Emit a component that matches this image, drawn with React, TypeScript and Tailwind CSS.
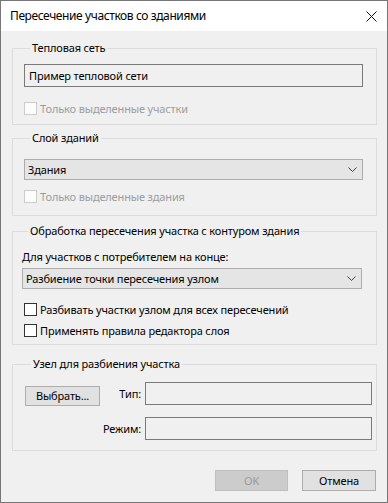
import React from "react";

const font = { fontFamily: '"Noto Sans", "Liberation Sans", sans-serif' };

function CheckBox({ label, disabled }: { label: string; disabled?: boolean }) {
  return (
    <div className="flex h-[13px] items-center">
      <span
        className={
          disabled
            ? "h-[13px] w-[13px] shrink-0 border border-[#cccccc] bg-[#fcfcfc]"
            : "h-[13px] w-[13px] shrink-0 border border-[#333333] bg-white"
        }
      />
      <span
        className={
          disabled
            ? "ml-[3px] whitespace-nowrap text-[#9d9d9d]"
            : "ml-[3px] whitespace-nowrap text-black"
        }
      >
        {label}
      </span>
    </div>
  );
}

function ComboBox({ value }: { value: string }) {
  return (
    <div className="flex h-[21px] items-center justify-between border border-[#adadad] bg-[#e5e5e5] pl-[3px] pr-[4px]">
      <span className="whitespace-nowrap">{value}</span>
      <svg width="9" height="6" viewBox="0 0 9 6" className="mr-[1px]">
        <polyline
          points="0.5,0.5 4.5,4.5 8.5,0.5"
          fill="none"
          stroke="#3f3f3f"
          strokeWidth="1"
        />
      </svg>
    </div>
  );
}

function Group({
  title,
  className,
  children,
}: {
  title: string;
  className: string;
  children: React.ReactNode;
}) {
  return (
    <fieldset className={"ml-[11px] w-[365px] border border-[#dcdcdc] " + className}>
      <legend className="ml-[6px] h-[16px] px-[2px] leading-[16px]">{title}</legend>
      {children}
    </fieldset>
  );
}

export default function App() {
  return (
    <div
      className="h-[503px] w-[388px] overflow-hidden border border-[#777777] bg-[#f0f0f0] text-[11px] leading-[16px] tracking-[-0.15px] text-black"
      style={font}
    >
      {/* Title bar */}
      <div className="flex h-[30px] items-center justify-between bg-white pl-[9px] pr-[10px]">
        <span className="whitespace-nowrap text-[12px] tracking-[-0.4px]">
          Пересечение участков со зданиями
        </span>
        <svg width="11" height="11" viewBox="0 0 11 11">
          <path d="M0.5 0.5 L10.5 10.5 M10.5 0.5 L0.5 10.5" stroke="#111" strokeWidth="1" />
        </svg>
      </div>

      {/* Тепловая сеть */}
      <Group title="Тепловая сеть" className="mt-[9px] pl-[11px] pt-[8px] pb-[9px]">
        <div className="flex h-[23px] w-[339px] items-center border border-[#7a7a7a] bg-[#f0f0f0] pl-[4px]">
          Пример тепловой сети
        </div>
        <div className="mt-[15px]">
          <CheckBox label="Только выделенные участки" disabled />
        </div>
      </Group>

      {/* Слой зданий */}
      <Group title="Слой зданий" className="mt-[5px] pl-[11px] pt-[13px] pb-[12px]">
        <div className="w-[339px]">
          <ComboBox value="Здания" />
        </div>
        <div className="mt-[10px]">
          <CheckBox label="Только выделенные здания" disabled />
        </div>
      </Group>

      {/* Обработка пересечения */}
      <Group
        title="Обработка пересечения участка с контуром здания"
        className="mt-[7px] pl-[9px] pt-[10px] pb-[7px]"
      >
        <div className="whitespace-nowrap">Для участков с потребителем на конце:</div>
        <div className="mt-[3px] w-[340px]">
          <ComboBox value="Разбиение точки пересечения узлом" />
        </div>
        <div className="mt-[14px] pl-[2px]">
          <CheckBox label="Разбивать участки узлом для всех пересечений" />
        </div>
        <div className="mt-[8px] pl-[2px]">
          <CheckBox label="Применять правила редактора слоя" />
        </div>
      </Group>

      {/* Узел для разбиения */}
      <Group title="Узел для разбиения участка" className="mt-[11px] pl-[12px] pt-[10px] pb-[10px]">
        <div className="grid grid-cols-[75px_41px_231px] gap-y-[11px]">
          <div className="mt-[4px] flex h-[20px] items-center justify-center border border-[#adadad] bg-[#e1e1e1]">
            Выбрать...
          </div>
          <div className="flex h-[23px] items-center justify-end">Тип:</div>
          <div className="ml-[4px] h-[23px] border border-[#7a7a7a] bg-[#f0f0f0]" />
          <div />
          <div className="flex h-[23px] items-center justify-end">Режим:</div>
          <div className="ml-[4px] h-[23px] border border-[#7a7a7a] bg-[#f0f0f0]" />
        </div>
      </Group>

      {/* Buttons */}
      <div className="mt-[19px] flex justify-end gap-[14px] pr-[11px]">
        <div className="flex h-[21px] w-[73px] items-center justify-center border border-[#bfbfbf] bg-[#cccccc] text-[#9a9a9a]">
          OK
        </div>
        <div className="flex h-[21px] w-[74px] items-center justify-center border border-[#adadad] bg-[#e1e1e1]">
          Отмена
        </div>
      </div>
    </div>
  );
}
